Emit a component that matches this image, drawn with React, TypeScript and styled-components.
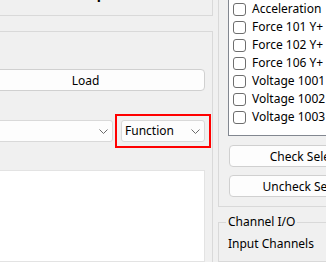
import React from 'react';
import styled, { createGlobalStyle } from 'styled-components';

const GlobalStyle = createGlobalStyle`
  html, body {
    margin: 0;
    padding: 0;
    background: #f0f0f0;
  }
  body {
    font-family: "Noto Sans", "Open Sans", sans-serif;
    font-size: 12px;
    color: #000;
  }
`;

const Window = styled.div`
  width: 326px;
  height: 262px;
  overflow: hidden;
  display: flex;
  background: #f0f0f0;
`;

// left side: two group boxes, their left edges run off the window
const LeftColumn = styled.div`
  flex: none;
  width: 254px;
  margin-left: -41px;
  display: flex;
  flex-direction: column;
`;

const TopGroup = styled.div`
  height: 15px;
  border-right: 1px solid #d9d9d9;
  border-bottom: 1px solid #d9d9d9;
  display: flex;
  justify-content: center;
  overflow: hidden;
`;

const GroupTitle = styled.div`
  margin-top: -13px;
  font-size: 14px;
  line-height: 14px;
  font-weight: bold;
`;

const MainGroup = styled.div`
  flex: 1;
  margin-top: 15px;
  padding: 37px 7px 0 7px;
  border-top: 1px solid #d9d9d9;
  border-right: 1px solid #d9d9d9;
  display: flex;
  flex-direction: column;
`;

const Button = styled.button<{ $width?: number }>`
  flex: none;
  height: 22px;
  width: ${({ $width }) => ($width ? `${$width}px` : '100%')};
  padding: 0;
  background: #fdfdfd;
  border: 1px solid #d0d0d0;
  border-radius: 4px;
  font-family: inherit;
  font-size: 12px;
  color: #000;
  white-space: nowrap;
  overflow: hidden;
`;

const ComboRow = styled.div`
  margin-top: 29px;
  display: flex;
  gap: 8px;
`;

const Combo = styled.div<{ $width?: number }>`
  flex: ${({ $width }) => ($width ? 'none' : '1')};
  width: ${({ $width }) => ($width ? `${$width}px` : 'auto')};
  height: 22px;
  box-sizing: border-box;
  display: flex;
  align-items: center;
  justify-content: space-between;
  padding: 0 4px 0 3px;
  background: #fdfdfd;
  border: 1px solid #d9d9d9;
  border-radius: 3px;
  line-height: 16px;
`;

const Highlight = styled.div`
  flex: none;
  display: flex;
  outline: 2px solid #ff0000;
  outline-offset: 4px;
`;

const Chevron = () => (
  <svg width="9" height="5" viewBox="0 0 9 5">
    <polyline points="0.5,0.5 4.5,4.5 8.5,0.5" fill="none" stroke="#6a6a6a" strokeWidth="1" />
  </svg>
);

const TextArea = styled.div`
  flex: 1;
  margin-top: 28px;
  background: #fff;
  border: 1px solid #e3e3e3;
`;

// right side: checked list box with its buttons, then the channel group
const RightColumn = styled.div`
  flex: none;
  width: 220px;
  margin-left: 5px;
  display: flex;
  flex-direction: column;
`;

const ListGroup = styled.div`
  padding: 0 9px 9px 9px;
  border: 1px solid #d9d9d9;
  border-top: none;
  display: flex;
  flex-direction: column;
  gap: 8px;
`;

const CheckList = styled.div`
  width: 166px;
  height: 136px;
  margin-bottom: 1px;
  padding-left: 4px;
  box-sizing: border-box;
  background: #fff;
  border: 1px solid #828790;
  border-top: none;
  overflow: hidden;
`;

const CheckRow = styled.div`
  height: 18px;
  display: flex;
  align-items: flex-start;
  gap: 6px;
  white-space: nowrap;
  line-height: 17px;
`;

const CheckBox = styled.span`
  flex: none;
  width: 13px;
  height: 13px;
  margin-top: 3px;
  box-sizing: border-box;
  background: #fff;
  border: 1px solid #6e6e6e;
  border-radius: 3px;
`;

const ListButton = styled(Button)`
  margin-left: 1px;
`;

const ChannelGroup = styled.fieldset`
  margin: 7px 0 0 0;
  padding: 0 0 0 7px;
  min-inline-size: 0;
  border: 1px solid #d9d9d9;
  flex: 1;
`;

const Legend = styled.legend`
  padding: 0 2px;
  line-height: 16px;
`;

const FieldLabel = styled.div`
  margin-top: 6px;
  padding-left: 2px;
  line-height: 16px;
`;

const channels = [
  'Acceleration',
  'Force 101 Y+',
  'Force 102 Y+',
  'Force 106 Y+',
  'Voltage 1001',
  'Voltage 1002',
  'Voltage 1003',
];

export default function App() {
  return (
    <>
      <GlobalStyle />
      <Window>
        <LeftColumn>
          <TopGroup>
            <GroupTitle>Setup</GroupTitle>
          </TopGroup>
          <MainGroup>
            <Button>Load</Button>
            <ComboRow>
              <Combo>
                <span />
                <Chevron />
              </Combo>
              <Highlight>
                <Combo $width={84}>
                  <span>Function</span>
                  <Chevron />
                </Combo>
              </Highlight>
            </ComboRow>
            <TextArea />
          </MainGroup>
        </LeftColumn>

        <RightColumn>
          <ListGroup>
            <CheckList>
              {channels.map((name) => (
                <CheckRow key={name}>
                  <CheckBox />
                  <span>{name}</span>
                </CheckRow>
              ))}
            </CheckList>
            <ListButton $width={166}>Check Selected</ListButton>
            <ListButton $width={166}>Uncheck Selected</ListButton>
          </ListGroup>
          <ChannelGroup>
            <Legend>Channel I/O</Legend>
            <FieldLabel>Input Channels</FieldLabel>
          </ChannelGroup>
        </RightColumn>
      </Window>
    </>
  );
}
